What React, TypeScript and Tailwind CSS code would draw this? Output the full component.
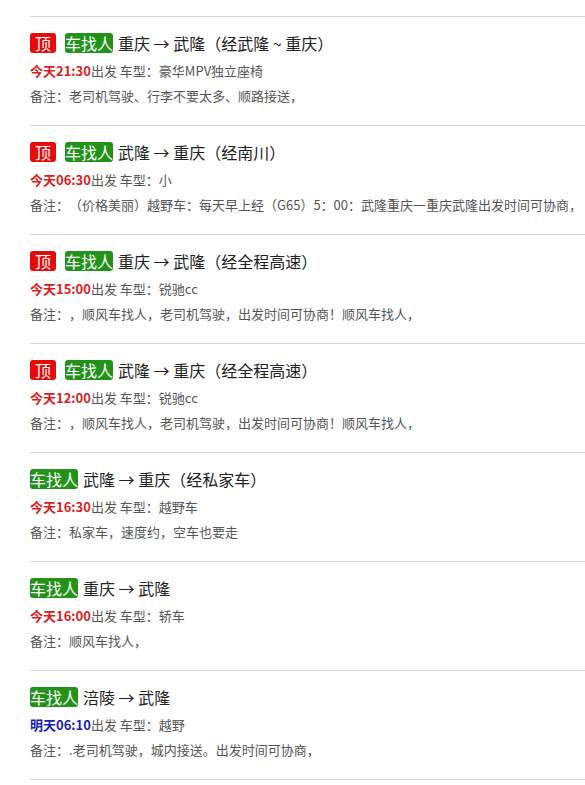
import React from 'react';

type Trip = {
  top: boolean;
  route: string;
  day: string;
  time: string;
  car: string;
  note: string;
  tomorrow?: boolean;
};

const trips: Trip[] = [
  { top: true, route: '重庆 → 武隆（经武隆 ~ 重庆）', day: '今天', time: '21:30', car: '豪华MPV独立座椅', note: '老司机驾驶、行李不要太多、顺路接送，' },
  { top: true, route: '武隆 → 重庆（经南川）', day: '今天', time: '06:30', car: '小', note: '（价格美丽）越野车：每天早上经（G65）5：00：武隆重庆一重庆武隆出发时间可协商，' },
  { top: true, route: '重庆 → 武隆（经全程高速）', day: '今天', time: '15:00', car: '锐驰cc', note: '，顺风车找人，老司机驾驶，出发时间可协商！顺风车找人，' },
  { top: true, route: '武隆 → 重庆（经全程高速）', day: '今天', time: '12:00', car: '锐驰cc', note: '，顺风车找人，老司机驾驶，出发时间可协商！顺风车找人，' },
  { top: false, route: '武隆 → 重庆（经私家车）', day: '今天', time: '16:30', car: '越野车', note: '私家车，速度约，空车也要走' },
  { top: false, route: '重庆 → 武隆', day: '今天', time: '16:00', car: '轿车', note: '顺风车找人，' },
  { top: false, route: '涪陵 → 武隆', day: '明天', time: '06:10', car: '越野', note: '.老司机驾驶，城内接送。出发时间可协商，', tomorrow: true },
];

export default function App() {
  return (
    <div className="min-h-screen bg-white overflow-hidden pt-4 pl-[30px] [text-spacing-trim:space-all] font-['Microsoft_YaHei','Noto_Sans_CJK_SC',sans-serif]">
      {trips.map((t, i) => (
        <div key={i} className="border-t border-[#d9d9d9] pt-4 pb-[19px] whitespace-nowrap">
          <div className="flex items-center h-5 text-[16px] leading-5 text-[#222]">
            {t.top && (
              <span className="inline-block h-5 px-[5px] mr-[9px] bg-[#e50b0b] text-white rounded-[3px]">顶</span>
            )}
            <span className="inline-block h-5 bg-[#23921a] text-white rounded-[3px]">车找人</span>
            <span className="ml-[5px]">{t.route}</span>
          </div>
          <div className="mt-2 text-[13px] leading-5 text-[#555]">
            <span className={t.tomorrow ? 'font-bold text-[#1c1cb0]' : 'font-bold text-[#d81e1e]'}>
              {t.day}{t.time}
            </span>
            出发 车型：{t.car}
          </div>
          <div className="mt-[5px] text-[13px] leading-5 text-[#555]">备注：{t.note}</div>
        </div>
      ))}
      <div className="border-t border-[#d9d9d9]" />
    </div>
  );
}
